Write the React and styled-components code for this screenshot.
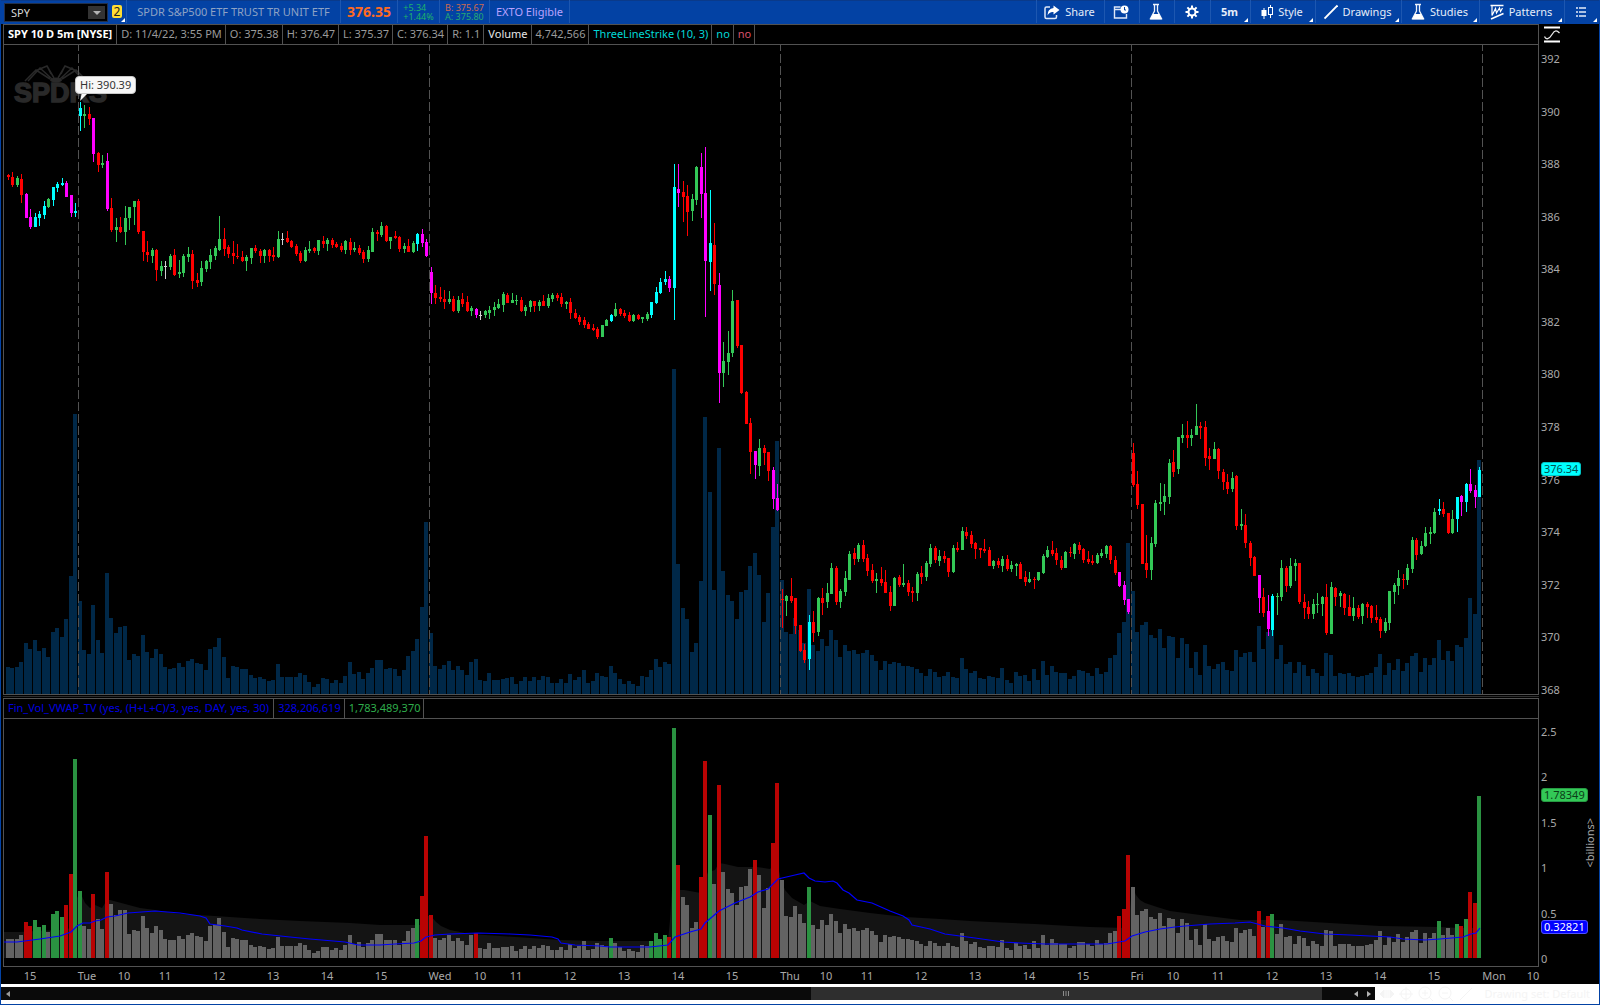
import { useState } from "react";
import styled, { createGlobalStyle } from "styled-components";

// one bar per entry: colour letter, then high, body top, body bottom, low
const CANDLES = `
r174,175,177,180 r172,177,185,187 g176,178,185,187 r174,179,195,203 m193,194,218,218 m209,217,227,229 c213,217,227,227 c211,214,218,226
c201,206,215,219 g198,199,207,208 c187,187,200,206 c182,184,188,192 c178,183,185,186 m181,183,197,197 m195,195,213,217 c203,211,213,217
c102,108,116,131 g105,114,116,128 r107,114,119,125 m118,118,154,162 r152,153,165,172 g155,163,165,168 m153,161,209,211 r198,208,230,232
g218,227,230,242 r217,227,232,233 g206,218,232,245 g207,207,218,230 g201,201,207,225 r199,201,232,234 r231,231,252,261 r241,252,255,262
g248,250,256,263 r249,250,270,281 g261,266,271,276 w261,266,267,279 g254,256,267,270 r249,255,275,276 g260,272,274,278 g254,256,273,277
g247,254,257,262 r250,254,281,289 r273,280,283,287 g261,268,282,286 g260,261,269,272 g249,255,262,269 g246,248,256,260 g216,239,250,251
r228,239,249,256 r245,247,254,258 r241,253,256,264 r244,256,257,259 r251,257,261,262 g255,257,261,271 g248,248,258,264 r245,248,251,253
r249,251,256,263 g249,250,256,263 r249,250,256,262 r247,255,257,261 g231,239,257,258 w233,239,240,245 r231,238,242,243 r240,241,247,248
r244,246,254,256 r251,253,261,263 g247,250,261,262 g241,249,251,253 r247,248,251,253 g240,240,251,255 r236,241,244,248 g238,240,244,251
r238,240,245,248 r242,244,247,248 r243,246,250,252 g240,241,250,254 r238,242,250,255 g242,248,250,252 r245,248,253,255 r250,252,259,263
g246,250,259,262 g228,232,252,252 r230,232,234,241 g222,226,235,237 r225,226,241,242 g237,237,241,249 r231,236,238,239 r236,237,249,252
g243,246,249,253 r239,246,252,252 g241,243,252,253 c233,234,244,251 m229,234,243,247 m239,242,256,257 m267,272,293,304 r285,293,298,304
r287,297,299,302 r290,299,302,309 g291,299,302,304 r296,299,311,312 g296,300,311,313 r293,299,304,307 r296,302,311,312 g306,308,311,316
m308,309,315,318 w311,315,316,320 g310,311,315,318 g306,310,313,319 g302,307,310,316 g299,304,308,309 g292,294,305,312 r293,295,303,303
g293,300,303,303 g295,300,301,305 r297,300,311,312 g305,307,311,316 g300,301,307,312 r301,301,306,312 g300,302,306,311 r295,301,306,306
g294,298,306,308 g293,295,299,302 r293,295,298,301 r293,297,304,307 g301,302,304,309 r298,302,313,319 r309,313,318,319 r315,317,322,325
r317,320,325,328 r322,324,329,329 r324,328,330,331 r327,329,337,339 g325,325,337,337 g319,320,326,326 c314,315,321,322 g303,309,316,317
r308,309,314,316 r310,313,316,318 r312,315,321,322 g314,315,321,322 r314,315,319,320 g317,317,319,323 g312,314,319,321 c302,302,315,318
c287,292,303,304 c278,282,293,294 c271,279,282,285 m276,279,288,292 c164,187,288,320 m164,189,193,207 r181,192,197,222 r185,196,212,236
g194,199,211,221 g166,167,200,205 m153,167,194,218 m147,193,261,317 c190,243,262,291 r223,245,284,295 m273,285,373,403 g342,361,373,387
g331,353,362,375 g290,301,353,357 r300,300,346,348 r345,345,393,394 r391,392,424,424 r418,423,452,474 m451,451,465,479 g439,448,466,476
r445,448,453,465 r452,452,471,481 m467,470,499,509 m484,498,510,511 r589,599,600,628 g595,596,601,616 r578,596,601,603 r598,598,626,634
r625,625,651,652 r644,650,660,663 c615,622,659,670 r611,622,633,642 g597,598,632,636 r588,598,603,615 g583,593,602,608 g563,568,594,594
r566,568,602,605 g589,591,602,608 g571,578,592,596 g551,554,580,580 r548,553,559,565 g543,545,559,562 r540,545,559,562 r554,558,571,576
r564,570,581,583 g573,579,581,593 r567,579,583,586 r570,582,593,593 r586,592,606,611 g577,578,606,606 r575,577,585,587 g564,583,585,587
r580,583,592,596 r587,591,593,602 g572,574,593,601 r566,573,577,584 g561,563,577,581 g544,548,564,567 r546,548,560,563 g550,556,561,566
r551,556,559,563 r558,558,572,577 g545,548,572,573 r542,548,550,552 g527,531,550,550 r527,532,536,539 r531,535,544,548 r542,543,549,559
r548,548,550,558 r539,549,551,553 r547,550,566,566 g560,561,566,569 r558,561,565,568 g556,559,566,572 r555,559,569,571 g561,565,569,572
g563,564,566,576 r562,564,579,579 r571,577,582,586 g572,579,582,583 r577,579,580,589 g572,572,580,581 g554,556,573,574 g546,550,557,558
r541,550,554,556 r548,553,560,565 r556,560,568,570 g551,552,568,568 r547,552,553,557 g543,544,554,559 r542,545,550,554 r548,549,560,563
r551,559,562,564 r555,561,563,565 g553,555,563,564 g549,553,556,558 g545,546,554,558 r545,546,560,564 r556,560,573,575 m572,572,586,587
m581,585,600,605 m599,599,612,614 r443,453,485,487 r471,484,505,509 r504,504,564,564 r535,563,570,578 g537,543,570,580 g500,503,544,547
g483,502,504,511 g484,496,502,515 g459,463,497,504 r450,462,472,477 g437,437,469,474 g424,435,438,443 r421,435,438,448 g429,435,438,446
g404,426,435,435 r422,426,428,439 r421,427,458,466 r448,456,459,470 g442,449,459,459 r448,449,471,479 r469,472,482,490 r474,482,489,494
g472,478,489,492 r475,476,526,530 g509,524,526,530 r514,525,543,548 r541,543,558,566 r556,557,576,576 m575,575,598,613 r588,597,613,617
m595,611,629,636 c594,596,630,636 g593,596,597,615 g560,568,597,601 r566,568,586,592 g558,566,586,588 g559,563,566,581 r563,563,602,604
r594,602,608,619 r601,607,614,619 g599,604,614,619 g593,604,605,613 g596,597,604,616 r584,597,633,635 g582,587,634,634 r587,588,597,606
g591,593,596,607 r593,594,608,615 r595,607,616,616 g597,608,616,621 r605,608,617,619 g603,604,616,624 r602,604,607,618 r605,606,618,623
r605,617,620,623 r617,619,631,638 g618,622,631,633 g591,591,623,630 g583,585,592,604 g570,578,586,595 r574,579,580,589 g564,568,580,585
g537,540,569,573 r538,540,555,560 g541,546,554,555 g527,533,546,547 g527,532,534,544 g508,512,533,534 c499,509,511,515 r502,509,514,517
r513,513,533,534 g510,519,533,534 c497,497,519,532 m495,496,502,516 c483,484,502,512 m469,484,491,493 m485,490,497,508 c467,470,497,497`
    .trim()
    .split(/\s+/)
    .map((entry) => ({ kind: entry[0], levels: entry.slice(1).split(",").map(Number) }));

const VOLUMES = [
    27, 26, 27, 32, 51, 45, 54, 43, 46, 37, 62, 66, 57, 75, 118, 280,
    93, 44, 40, 89, 54, 41, 121, 76, 61, 67, 68, 34, 40, 38, 59, 42, 36, 45, 40, 27, 25, 26, 31, 27, 33, 35, 31, 30, 24, 45, 47, 56,
    37, 16, 28, 27, 25, 25, 19, 16, 17, 15, 13, 14, 30, 17, 17, 17, 17, 21, 19, 12, 7, 10, 16, 15, 11, 14, 11, 18, 32, 20, 22, 15,
    21, 26, 34, 34, 25, 26, 25, 18, 24, 38, 43, 55, 87, 172,
    61, 28, 25, 29, 33, 24, 28, 24, 19, 32, 35, 14, 13, 21, 14, 14, 15, 16, 17, 10, 13, 17, 13, 17, 14, 18, 17, 11, 11, 15, 11, 20,
    14, 17, 24, 11, 13, 21, 18, 17, 28, 21, 15, 10, 13, 10, 8, 18, 17, 24, 35, 27, 32, 30, 325, 130, 86, 75, 42, 51, 113, 277, 202, 104,
    246, 123, 99, 93, 75, 102, 104, 128, 141, 119, 72, 101, 167, 253,
    114, 62, 60, 76, 64, 51, 105, 49, 43, 55, 48, 64, 54, 37, 49, 43, 44, 40, 41, 44, 39, 33, 24, 33, 30, 32, 31, 28, 28, 27, 25, 21,
    18, 25, 22, 17, 18, 22, 17, 16, 36, 25, 21, 23, 16, 15, 18, 17, 16, 26, 14, 11, 22, 18, 19, 13, 25, 14, 33, 19, 28, 22, 21, 21,
    15, 18, 24, 23, 21, 18, 26, 20, 22, 36, 39, 61, 72, 151,
    103, 62, 69, 72, 59, 56, 65, 46, 58, 57, 36, 56, 50, 26, 42, 19, 49, 28, 25, 30, 32, 24, 23, 44, 37, 41, 42, 32, 68, 45, 62, 64,
    35, 49, 30, 32, 21, 32, 29, 18, 25, 21, 18, 41, 39, 18, 21, 20, 21, 18, 17, 18, 19, 21, 27, 40, 19, 31, 24, 35, 23, 31, 38, 41,
    22, 36, 29, 36, 54, 34, 43, 33, 49, 47, 56, 96, 80, 234,
];

const UP_BARS = [6, 7, 8, 10, 11, 12, 15, 16, 91, 134, 143, 144, 145, 146, 148, 156, 178, 281, 318, 322, 324, 327];
const DOWN_BARS = [4, 5, 13, 14, 19, 22, 92, 93, 94, 104, 147, 149, 154, 155, 158, 166, 170, 171, 247, 248, 249, 278, 280, 323, 325, 326];

const BAND =
    "4,932 20,932 35,931 60,930 72,928 75,902 80,892 85,903 90,908 95,905 102,908 107,900 110,900 125,904 140,908 155,910 180,914 215,916 260,919 300,921 350,923 380,925 420,925 426,916 431,916 436,922 441,926 450,930 470,934 500,936 530,938 560,940 600,941 668,941 670,920 672,890 684,890 701,893 705,880 708,872 715,870 719,863 725,864 738,867 757,867 770,869 775,864 777,862 781,880 785,890 792,898 804,905 810,901 820,906 840,909 870,913 905,917 940,919 970,921 990,922 1035,924 1070,926 1090,927 1126,928 1129,920 1132,886 1136,895 1140,900 1145,903 1157,907 1170,911 1200,915 1240,920 1280,920 1330,923 1380,926 1440,927 1460,928 1474,928 1476,925 1481,918";

const AVERAGE =
    "4,942 17,942 40,939 60,936 71,932 77,926 83,923 90,923 95,921 101,920 107,917 115,916 128,913 155,911 180,913 200,916 206,918 210,924 225,926 237,928 242,930 262,934 290,937 310,939 345,942 358,945 380,945 395,944 414,943 421,941 426,937 435,935 450,934 478,933 510,934 530,935 552,937 558,939 561,943 575,945 600,946 610,947 650,947 668,945 675,937 690,932 701,929 705,923 719,911 735,903 750,897 758,892 768,889 778,879 795,875 804,873 809,878 815,881 825,882 833,881 837,883 843,890 849,893 857,900 872,903 890,911 903,916 909,920 912,925 930,929 945,934 975,938 1003,942 1020,943 1045,944 1107,944 1125,941 1132,936 1145,932 1160,929 1175,927 1185,926 1210,924 1235,923 1250,922 1265,926 1283,928 1300,931 1325,934 1350,935 1370,936 1390,937 1403,939 1425,940 1440,939 1463,937 1471,934 1476,933 1480,928";

const SESSIONS = [78, 429, 780, 1131, 1482];

const TIMES = [
    [30, "15"], [87, "Tue"], [124, "10"], [165, "11"], [219, "12"], [273, "13"], [327, "14"], [381, "15"],
    [440, "Wed"], [480, "10"], [516, "11"], [570, "12"], [624, "13"], [678, "14"], [732, "15"],
    [790, "Thu"], [826, "10"], [867, "11"], [921, "12"], [975, "13"], [1029, "14"], [1083, "15"],
    [1137, "Fri"], [1173, "10"], [1218, "11"], [1272, "12"], [1326, "13"], [1380, "14"], [1434, "15"],
    [1494, "Mon"], [1533, "10"],
];

const PRICES = [392, 390, 388, 386, 384, 382, 380, 378, 376, 374, 372, 370, 368];
const BILLIONS = ["2.5", "2", "1.5", "1", "0.5", "0"];

const COLORS = { r: "#ff0000", g: "#33c857", c: "#00ffff", m: "#ff00ff", w: "#d0d0d0" };

const barX = (i) => Math.floor(8 + i * 4.5);

// the lower study plots money traded, so the share volume is weighted by price
const moneyHeight = (i) => {
    const [, top, bottom] = CANDLES[i].levels;
    const price = 392 - ((top + bottom) / 2 - 60) / 26.28;
    return Math.round(VOLUMES[i] * price * 0.00184);
};

const studyColor = (i) => {
    if (UP_BARS.includes(i)) return "#2a9241";
    if (DOWN_BARS.includes(i)) return "#b90303";
    return "#636363";
};

function ShareIcon() {
    return (
        <svg width="16" height="16" viewBox="0 0 16 16" aria-hidden="true">
            <path d="M6 3H2.5Q1 3 1 4.5V13Q1 14.5 2.5 14.5H11Q12.5 14.5 12.5 13V11" fill="none" stroke="#dfe8f7" strokeWidth="1.5" />
            <path d="M9.5 1.5 15.5 6 9.5 10.5V8Q5.5 7.5 3.5 11.5 3.5 4.5 9.5 4Z" fill="#fff" />
        </svg>
    );
}

function WindowIcon() {
    return (
        <svg width="16" height="16" viewBox="0 0 16 16" aria-hidden="true">
            <path d="M8 5.5H1.5V14H13.5V10M1.5 5.500V3H7.500" fill="none" stroke="#dfe8f7" strokeWidth="1.4" />
            <circle cx="11.5" cy="5.5" r="4" fill="#fff" />
            <path d="M11.5 3V6H13" fill="none" stroke="#0342a4" />
        </svg>
    );
}

function FlaskIcon() {
    return (
        <svg width="14" height="18" viewBox="1 0 14 18" aria-hidden="true">
            <path d="M5 1.5H11M6.5 2V8L2.5 15.5H13.5L9.5 8V2" fill="none" stroke="#eef3fb" strokeWidth="1.3" />
            <path d="M5 11H11L14 16.5H2Z" fill="#fff" />
        </svg>
    );
}

function GearIcon() {
    return (
        <svg width="16" height="16" viewBox="0 0 16 16" aria-hidden="true">
            <circle cx="8" cy="8" r="3.5" fill="none" stroke="#fff" strokeWidth="2" />
            <path d="M8 1.5V4M8 12V14.5M1.5 8H4M12 8H14.5M3.4 3.4 5.2 5.2M10.8 10.8 12.6 12.6M12.6 3.4 10.8 5.2M5.2 10.8 3.4 12.6" stroke="#fff" strokeWidth="2" />
        </svg>
    );
}

function CandlesIcon() {
    return (
        <svg width="12" height="16" viewBox="0 0 12 16" aria-hidden="true">
            <path d="M3 4V15M9.500 1V4M9.500 11V14" stroke="#fff" />
            <rect x="0.5" y="6" width="5" height="6" fill="#fff" />
            <rect x="7.5" y="3.500" width="4" height="7" fill="none" stroke="#fff" />
        </svg>
    );
}

function LineIcon() {
    return (
        <svg width="14" height="16" viewBox="0 0 14 16" aria-hidden="true">
            <path d="M0.500 14.500 13.500 1.500" stroke="#fff" strokeWidth="1.8" />
        </svg>
    );
}

function PatternIcon() {
    return (
        <svg width="14" height="16" viewBox="0 0 14 16" aria-hidden="true">
            <path d="M0.5 1.5H13.500M1 15 13.500 9.500" stroke="#fff" strokeWidth="1.6" />
            <path d="M2 2V11.500L5.500 4.500 6.500 9 9.500 4 10.500 7.500 12.500 4" fill="none" stroke="#fff" strokeWidth="1.2" />
        </svg>
    );
}

function ListIcon() {
    return (
        <svg width="12" height="12" viewBox="0 0 12 12" aria-hidden="true">
            <path d="M1 2H3M4 2H11M1 6H3M4 6H11M1 10H3M4 10H11" stroke="#e6edf9" strokeWidth="1.3" />
        </svg>
    );
}

function ScaleIcon() {
    return (
        <svg width="16" height="17" viewBox="0 0 16 17" aria-hidden="true">
            <path d="M0 1.500H16M0 15.500H16" stroke="#fff" strokeWidth="2" />
            <path d="M0.500 10.500C2 14 5 13.500 8 8.500S13 4.500 15.500 7" fill="none" stroke="#e8e8e8" strokeWidth="1.3" />
        </svg>
    );
}

function Logo() {
    return (
        <g fill="#292929">
            <path
                d="M25 81 36 70 50 79M28 81 40 68 52 79M35 71 47 66 54 78M47 66 51 74M87 81 76 70 62 79M84 81 72 68 60 79M77 71 65 66 58 78M65 66 61 74"
                fill="none"
                stroke="#292929"
                strokeWidth="1.5"
            />
            <ellipse cx="56" cy="80" rx="6" ry="2.500" />
            <text x="14" y="102" fontFamily="Liberation Sans, sans-serif" fontSize="27" fontWeight="700" stroke="#292929" strokeWidth="1.5">
                SPDRS
            </text>
        </g>
    );
}

function PriceChart() {
    return (
        <PriceSvg viewBox="4 45 1534 649" preserveAspectRatio="none" role="img" aria-label="SPY price and volume">
            <Logo />
            <g shapeRendering="crispEdges">
                {VOLUMES.map((volume, i) => (
                    <rect key={i} x={barX(i) - 2} y={694 - volume} width="4" height={volume} fill="#002848" />
                ))}
                {SESSIONS.map((x) => (
                    <rect key={x} x={x} y="45" width="1" height="649" fill="url(#dash)" />
                ))}
                {CANDLES.map(({ kind, levels: [high, top, bottom, low] }, i) => (
                    <g key={i} fill={COLORS[kind]}>
                        <rect x={barX(i)} y={high} width="1" height={low - high} />
                        <rect x={barX(i) - 1} y={top} width="3" height={bottom - top} />
                    </g>
                ))}
            </g>
            <path d="M82 92 80 101 89 92Z" fill="#f7f7f7" />
            <defs>
                <pattern id="dash" x="0" y="6" width="1600" height="12" patternUnits="userSpaceOnUse">
                    <rect width="1600" height="9" fill="#525252" />
                </pattern>
            </defs>
        </PriceSvg>
    );
}

function StudyChart() {
    return (
        <StudySvg viewBox="4 719 1534 247" preserveAspectRatio="none" role="img" aria-label="Dollar volume">
            <polygon points={`4,958 ${BAND} 1481,958`} fill="#141414" />
            <g shapeRendering="crispEdges">
                {VOLUMES.map((_, i) => (
                    <rect key={i} x={barX(i) - 2} y={958 - moneyHeight(i)} width="4" height={moneyHeight(i)} fill={studyColor(i)} />
                ))}
            </g>
            <polyline points={AVERAGE} fill="none" stroke="#0000ff" strokeWidth="1.2" />
        </StudySvg>
    );
}

export default function App() {
    const [symbol, setSymbol] = useState("SPY");

    return (
        <>
            <GlobalStyle />
            <Window>
                <TopBar>
                    <SymbolBox>
                        <SymbolInput aria-label="Symbol" value={symbol} onChange={(e) => setSymbol(e.target.value)} />
                        <SymbolToggle aria-label="Recent symbols">
                            <svg width="8" height="4" viewBox="0 0 8 4" aria-hidden="true">
                                <path d="M0 0H8L4 4Z" fill="#b4b4b4" />
                            </svg>
                        </SymbolToggle>
                    </SymbolBox>
                    <LinkButton>
                        <LinkBadge>2</LinkBadge>
                    </LinkButton>
                    <Quote $width={215} $color="#8ea3c4">SPDR S&amp;P500 ETF TRUST TR UNIT ETF</Quote>
                    <Quote $width={57}>
                        <LastPrice>376.35</LastPrice>
                    </Quote>
                    <Quote $width={42}>
                        <SmallPair>
                            <Tone $color="#1fb36b">+5.34</Tone>
                            <Tone $color="#1fb36b">+1.44%</Tone>
                        </SmallPair>
                    </Quote>
                    <Quote $width={50}>
                        <SmallPair>
                            <Tone $color="#cf6b4d">B: 375.67</Tone>
                            <Tone $color="#27a873">A: 375.80</Tone>
                        </SmallPair>
                    </Quote>
                    <Quote $width={80} $color="#b9a2ff">EXTO Eligible</Quote>
                    <Tools>
                        <ToolButton $width={68}><ShareIcon />Share</ToolButton>
                        <ToolButton $width={35} aria-label="Alerts"><WindowIcon /></ToolButton>
                        <ToolButton $width={35} aria-label="Edit studies"><FlaskIcon /></ToolButton>
                        <ToolButton $width={36} aria-label="Chart settings"><GearIcon /></ToolButton>
                        <ToolButton $width={40} $menu $bold>5m</ToolButton>
                        <ToolButton $width={65} $menu><CandlesIcon />Style</ToolButton>
                        <ToolButton $width={86} $menu><LineIcon />Drawings</ToolButton>
                        <ToolButton $width={78} $menu><FlaskIcon />Studies</ToolButton>
                        <ToolButton $width={85} $menu><PatternIcon />Patterns</ToolButton>
                        <ToolButton $width={35} $menu aria-label="More"><ListIcon /></ToolButton>
                    </Tools>
                </TopBar>

                <PricePane>
                    <Plot>
                        <InfoRow>
                            <InfoCell $color="#ffffff" $bold>SPY 10 D 5m [NYSE]</InfoCell>
                            <InfoCell>D: 11/4/22, 3:55 PM</InfoCell>
                            <InfoCell>O: 375.38</InfoCell>
                            <InfoCell>H: 376.47</InfoCell>
                            <InfoCell>L: 375.37</InfoCell>
                            <InfoCell>C: 376.34</InfoCell>
                            <InfoCell>R: 1.1</InfoCell>
                            <InfoCell $color="#e6e6e6">Volume</InfoCell>
                            <InfoCell>4,742,566</InfoCell>
                            <InfoCell $color="#00d8d8">ThreeLineStrike (10, 3)</InfoCell>
                            <InfoCell $color="#00d8d8">no</InfoCell>
                            <InfoCell $color="#d8506a">no</InfoCell>
                        </InfoRow>
                        <PriceChart />
                        <HighBubble>Hi: 390.39</HighBubble>
                    </Plot>
                    <Axis>
                        <AxisHead>
                            <ScaleIcon />
                        </AxisHead>
                        <PriceScale>
                            {PRICES.map((price) => (
                                <span key={price}>{price}</span>
                            ))}
                        </PriceScale>
                        <AxisBadge $bg="#00ffff" $edge="#00c4c4" $color="#00504f" style={{ top: `${(438 / 671) * 100}%` }}>376.34</AxisBadge>
                    </Axis>
                </PricePane>

                <Divider />

                <StudyPane>
                    <Plot>
                        <InfoRow>
                            <InfoCell $color="#0000e0">Fin_Vol_VWAP_TV (yes, (H+L+C)/3, yes, DAY, yes, 30)</InfoCell>
                            <InfoCell $color="#0000e0">328,206,619</InfoCell>
                            <InfoCell $color="#2fae4c">1,783,489,370</InfoCell>
                        </InfoRow>
                        <StudyChart />
                    </Plot>
                    <Axis>
                        <AxisHead />
                        <StudyScale>
                            {BILLIONS.map((value) => (
                                <span key={value}>{value}</span>
                            ))}
                        </StudyScale>
                        <AxisBadge $bg="#33c857" $edge="#279a43" $color="#0b3d18" style={{ top: `${(90 / 269) * 100}%` }}>1.78349</AxisBadge>
                        <AxisBadge $bg="#0000ff" $edge="#5050ff" $color="#ffffff" style={{ top: `${(222 / 269) * 100}%` }}>0.32821</AxisBadge>
                        <AxisUnit>&lt;billions&gt;</AxisUnit>
                    </Axis>
                </StudyPane>

                <TimeAxis>
                    <svg width="100%" height="17" viewBox="3 967 1596 17" preserveAspectRatio="none">
                        {TIMES.map(([x, label]) => (
                            <text key={x} x={x} y="980" textAnchor="middle" fontSize="11" fill="#a9a9a9">{label}</text>
                        ))}
                    </svg>
                </TimeAxis>

                <BottomBar>
                    <ScrollTrack>
                        <ArrowButton aria-label="Scroll to start">
                            <svg width="4" height="6" viewBox="0 0 4 6" aria-hidden="true"><path d="M4 0V6L0 3Z" fill="#9a9a9a" /></svg>
                        </ArrowButton>
                        <ScrollRail>
                            <ScrollThumb>
                                <svg width="6" height="5" viewBox="0 0 6 5" aria-hidden="true">
                                    <path d="M0.5 0V5M3 0V5M5.5 0V5" stroke="#8c8c8c" />
                                </svg>
                            </ScrollThumb>
                        </ScrollRail>
                        <ArrowButton aria-label="Scroll left">
                            <svg width="4" height="6" viewBox="0 0 4 6" aria-hidden="true"><path d="M4 0V6L0 3Z" fill="#b4b4b4" /></svg>
                        </ArrowButton>
                        <ArrowButton aria-label="Scroll right">
                            <svg width="4" height="6" viewBox="0 0 4 6" aria-hidden="true"><path d="M0 0V6L4 3Z" fill="#b4b4b4" /></svg>
                        </ArrowButton>
                    </ScrollTrack>
                    <DrawingTools>
                        <svg width="96" height="16" viewBox="0 0 96 16" fill="none" stroke="#f4f4f4" aria-hidden="true">
                            <path d="M1 8 5 4V12ZM15 8 11 4V12ZM7 4V12M9 4V12" fill="#f4f4f4" />
                            <circle cx="27" cy="8" r="5" />
                            <path d="M27 1V15M20 8H34" />
                            <circle cx="46" cy="7" r="6" />
                            <path d="M50 11 54 15M43 7H49M46 4V10" />
                            <circle cx="66" cy="7" r="6" />
                            <path d="M70 11 74 15M63 7H69M81 14 93 2" />
                        </svg>
                        <span>Drawing set: Default</span>
                    </DrawingTools>
                </BottomBar>
            </Window>
        </>
    );
}

const GlobalStyle = createGlobalStyle`
    * {
        box-sizing: border-box;
    }
    body {
        margin: 0;
        background: #000;
        font-family: "Noto Sans", "Open Sans", sans-serif;
        font-size: 11px;
        color: #a9a9a9;
    }
    button, input {
        font: inherit;
        color: inherit;
        border: none;
        background: none;
        padding: 0;
        margin: 0;
    }
`;

const Window = styled.div`
    min-height: 100vh;
    display: flex;
    flex-direction: column;
    border: 1px solid #0342a4;
    border-top: none;
    background: #000;
`;

const TopBar = styled.header`
    height: 24px;
    display: flex;
    align-items: stretch;
    background: #0342a4;
    box-shadow: inset 0 1px 0 #0a3a8a;
    padding: 0 0 1px 3px;
`;

const SymbolBox = styled.div`
    width: 104px;
    height: 19px;
    margin-top: 3px;
    padding: 2px;
    display: flex;
    background: #000;
    border: 1px solid #22304a;
`;

const SymbolInput = styled.input`
    flex: 1;
    min-width: 0;
    padding-left: 4px;
    color: #d8d8d8;
    outline: none;
`;

const SymbolToggle = styled.button`
    width: 17px;
    display: flex;
    align-items: center;
    justify-content: center;
    background: #333;
`;

const LinkButton = styled.button`
    position: relative;
    width: 18px;
    padding-left: 4px;
    display: flex;
    align-items: center;
    &::after {
        content: "";
        position: absolute;
        right: 1px;
        bottom: 1px;
        border-left: 4px solid transparent;
        border-bottom: 4px solid #fff;
    }
`;

const LinkBadge = styled.span`
    width: 10px;
    height: 13px;
    border-radius: 2px;
    background: #ffdd33;
    color: #222;
    font-size: 12px;
    line-height: 13px;
    text-align: center;
`;

const Quote = styled.div`
    width: ${(props) => props.$width}px;
    display: flex;
    align-items: center;
    justify-content: center;
    white-space: nowrap;
    color: ${(props) => props.$color || "#fff"};
    border-right: 1px solid #1d57b0;
    &:nth-child(3) {
        border-left: 1px solid #1d57b0;
    }
`;

const LastPrice = styled.strong`
    font-size: 14px;
    color: #ff6a1f;
`;

const SmallPair = styled.div`
    display: flex;
    flex-direction: column;
    font-size: 9px;
    line-height: 9px;
`;

const Tone = styled.span`
    color: ${(props) => props.$color};
`;

const Tools = styled.nav`
    margin-left: auto;
    display: flex;
`;

const ToolButton = styled.button`
    position: relative;
    min-width: ${(props) => props.$width}px;
    padding-right: 2px;
    display: flex;
    align-items: center;
    justify-content: center;
    gap: 5px;
    color: #e6edf9;
    font-weight: ${(props) => (props.$bold ? 700 : 400)};
    border-left: 1px solid #1d57b0;
    cursor: pointer;
    &::after {
        content: "";
        display: ${(props) => (props.$menu ? "block" : "none")};
        position: absolute;
        right: 2px;
        bottom: 1px;
        border-left: 4px solid transparent;
        border-bottom: 4px solid #fff;
    }
`;

const Pane = styled.section`
    display: flex;
    padding-left: 2px;
    min-height: 0;
`;

const PricePane = styled(Pane)`
    flex: 671 1 0;
`;

const StudyPane = styled(Pane)`
    flex: 269 1 0;
`;

const Plot = styled.div`
    position: relative;
    flex: 1;
    min-width: 0;
    display: flex;
    flex-direction: column;
    border: 1px solid #525252;
    border-top: none;
`;

const InfoRow = styled.div`
    height: 21px;
    display: flex;
    border-top: 1px solid #525252;
    border-bottom: 1px solid #525252;
`;

const InfoCell = styled.span`
    padding: 0 4px;
    line-height: 18px;
    white-space: nowrap;
    color: ${(props) => props.$color || "#9a9a9a"};
    font-weight: ${(props) => (props.$bold ? 700 : 400)};
    border-right: 1px solid #525252;
    &:not(:first-child) {
        padding-right: 3px;
    }
`;

const PriceSvg = styled.svg`
    display: block;
    width: 100%;
    flex: 1 1 0;
    min-height: 0;
`;

const StudySvg = styled(PriceSvg)``;

const HighBubble = styled.div`
    position: absolute;
    left: 71px;
    top: 52px;
    padding: 0 4px;
    border: 1px solid #c8c8c8;
    border-radius: 4px;
    background: #f7f7f7;
    color: #333;
    line-height: 16px;
`;

const Axis = styled.div`
    position: relative;
    width: 60px;
    display: flex;
    flex-direction: column;
`;

const AxisHead = styled.div`
    height: 21px;
    padding: 2px 5px;
`;

const PriceScale = styled.div`
    flex: 1;
    display: flex;
    flex-direction: column;
    justify-content: space-between;
    padding: 10px 0 1px 2px;
    line-height: 8px;
`;

const StudyScale = styled(PriceScale)`
    padding: 9px 0 4px 2px;
`;

const AxisBadge = styled.span`
    position: absolute;
    left: 2px;
    padding: 0 2px;
    border: 1px solid ${(props) => props.$edge};
    border-radius: 3px;
    line-height: 12px;
    background: ${(props) => props.$bg};
    color: ${(props) => props.$color};
`;

const AxisUnit = styled.span`
    position: absolute;
    right: 2px;
    top: 120px;
    line-height: 15px;
    writing-mode: vertical-rl;
    transform: rotate(180deg);
`;

const Divider = styled.div`
    height: 3px;
    margin: 0 60px 0 2px;
    border-top: 1px solid #000;
    border-bottom: 1px solid #000;
    background: #2e2e2e;
`;

const TimeAxis = styled.div`
    height: 17px;
    padding-left: 2px;
    svg {
        display: block;
    }
`;

const BottomBar = styled.footer`
    height: 20px;
    display: flex;
    align-items: center;
    background: #fff;
    padding-bottom: 1px;
`;

const ScrollTrack = styled.div`
    flex: 1;
    height: 13px;
    display: flex;
    background: #0a0a0a;
`;

const ArrowButton = styled.button`
    width: 13px;
    display: flex;
    align-items: center;
    justify-content: center;
`;

const ScrollRail = styled.div`
    flex: 1;
    display: flex;
    padding: 0 2% 0 58%;
`;

const ScrollThumb = styled.div`
    flex: 1;
    display: flex;
    align-items: center;
    justify-content: center;
    background: #2e2e2e;
`;

const DrawingTools = styled.div`
    width: 224px;
    padding: 0 9px 0 4px;
    display: flex;
    align-items: center;
    justify-content: space-between;
    color: #f4f4f4;
`;
